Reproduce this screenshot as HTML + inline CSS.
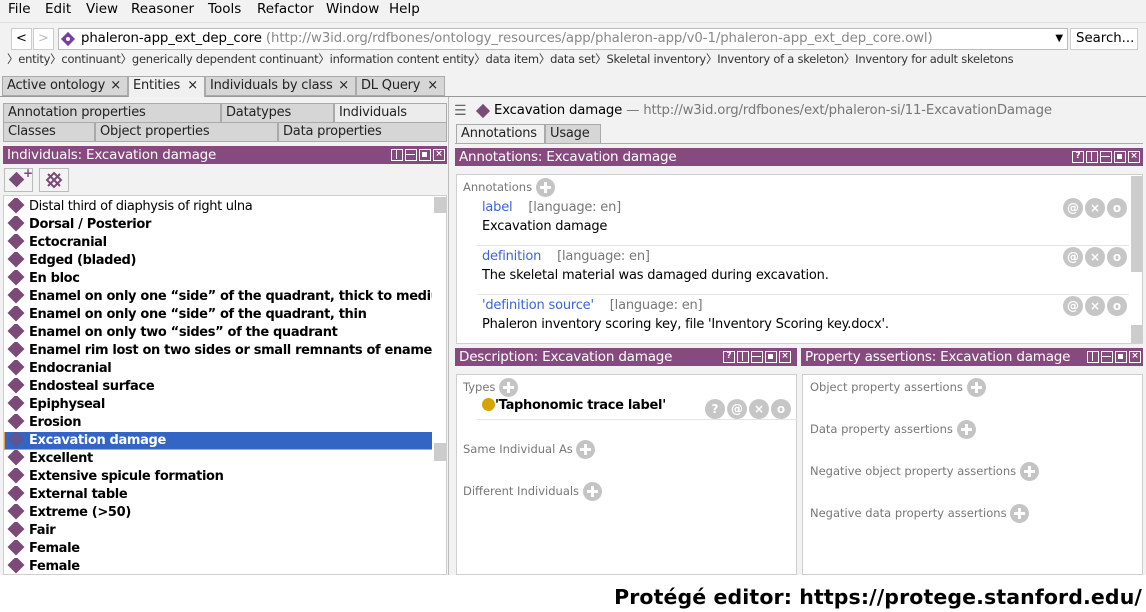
<!DOCTYPE html>
<html><head><meta charset="utf-8">
<style>
*{box-sizing:border-box;margin:0;padding:0}
body{width:1146px;height:612px;overflow:hidden;background:#f2f2f2;font-family:"DejaVu Sans","Liberation Sans",sans-serif;font-size:13px;color:#000;position:relative}
.a{position:absolute;white-space:nowrap}
.ph{position:absolute;background:#874a7e;color:#fff;font-size:13.5px;letter-spacing:-0.2px;line-height:18px;padding-left:4px;overflow:hidden;white-space:nowrap}
.wb{position:absolute;top:3px;display:flex;gap:2px}
.wb span{width:12px;height:12px;border:1.5px solid #fff;display:block;color:#fff;font-size:9px;line-height:9px;text-align:center;font-weight:bold;position:relative;letter-spacing:0}
.wb .v:after{content:"";position:absolute;left:3.5px;top:0;width:1.5px;height:9px;background:#fff}
.wb .h:after{content:"";position:absolute;left:0;top:3.5px;width:9px;height:1.5px;background:#fff}
.wb .f:after{content:"";position:absolute;left:2px;top:2px;width:5px;height:5px;background:#fff}
.tab{position:absolute;border:1px solid #aaa;background:#d6d6d6;line-height:18px;padding-left:4px;font-size:13px;letter-spacing:-0.2px;color:#222;white-space:nowrap}
.box{position:absolute;background:#fff;border:1px solid #cfcfcf}
.plus{display:inline-block;width:19px;height:19px;border-radius:50%;background:#c4c4c4;vertical-align:middle;position:relative}
.plus:before{content:"";position:absolute;left:4px;top:8px;width:11px;height:3px;background:#fff}
.plus:after{content:"";position:absolute;left:8px;top:4px;width:3px;height:11px;background:#fff}
.gr{color:#777;font-size:11.5px}
.ic{display:inline-block;width:20px;height:20px;border-radius:50%;background:#c6c6c6;color:#fff;font-weight:bold;font-size:12px;line-height:20px;text-align:center;margin-left:2px}
.d{display:inline-block;width:12px;height:12px;background:#7b4a77;transform:rotate(45deg);margin:0 7px 0 3px;vertical-align:-1px}
.row{height:18px;line-height:18px;font-weight:bold;font-size:13px;letter-spacing:-0.35px;padding-left:3px;white-space:nowrap;overflow:hidden;width:428px}
.blue{color:#3b64d8}
.m{position:absolute;top:1px;font-size:13.5px}
</style></head><body>
<!-- menu -->
<div class="m" style="left:8px">File</div>
<div class="m" style="left:45px">Edit</div>
<div class="m" style="left:86px">View</div>
<div class="m" style="left:131px">Reasoner</div>
<div class="m" style="left:208px">Tools</div>
<div class="m" style="left:257px">Refactor</div>
<div class="m" style="left:326px">Window</div>
<div class="m" style="left:389px">Help</div>
<div class="a" style="left:0;top:22px;width:1146px;height:1px;background:#ddd"></div>
<!-- nav -->
<div class="a" style="left:11px;top:28px;width:21px;height:22px;background:#fff;border:1px solid #ccc;text-align:center;line-height:20px">&lt;</div>
<div class="a" style="left:33px;top:28px;width:21px;height:22px;background:#fff;border:1px solid #ccc;text-align:center;line-height:20px;color:#bbb">&gt;</div>
<div class="a" style="left:58px;top:28px;width:1010px;height:22px;background:#fff;border:1px solid #bbb;line-height:20px;padding-left:22px;font-size:13.3px;letter-spacing:-0.1px">phaleron-app_ext_dep_core <span style="color:#888">(http://w3id.org/rdfbones/ontology_resources/app/phaleron-app/v0-1/phaleron-app_ext_dep_core.owl)</span>
<span style="position:absolute;left:4px;top:5px;width:10px;height:10px;background:#7a3ea0;transform:rotate(45deg)"></span>
<span style="position:absolute;left:7px;top:8px;width:4px;height:4px;background:#fff;border-radius:50%"></span>
<span style="position:absolute;right:4px;top:0;font-size:10px">▼</span></div>
<div class="a" style="left:1070px;top:28px;width:68px;height:22px;background:#fff;border:1px solid #ccc;line-height:20px;padding-left:5px;font-size:13.3px">Search...</div>
<div class="a" style="left:7px;top:51px;font-size:11.5px;letter-spacing:-0.25px;color:#333">〉entity〉continuant〉generically dependent continuant〉information content entity〉data item〉data set〉Skeletal inventory〉Inventory of a skeleton〉Inventory for adult skeletons</div>
<!-- main tabs -->
<div class="a" style="left:0;top:96px;width:1146px;height:1px;background:#999"></div>
<div class="tab" style="left:2px;top:76px;width:126px;height:20px">Active ontology <span style="position:absolute;right:6px">×</span></div>
<div class="tab" style="left:128px;top:76px;width:77px;height:21px;background:#f0f0f0;border-bottom:none">Entities <span style="position:absolute;right:6px">×</span></div>
<div class="tab" style="left:205px;top:76px;width:151px;height:20px">Individuals by class <span style="position:absolute;right:6px">×</span></div>
<div class="tab" style="left:356px;top:76px;width:89px;height:20px">DL Query <span style="position:absolute;right:6px">×</span></div>
<div class="a" style="left:448px;top:97px;width:1px;height:478px;background:#bbb"></div>
<!-- left tabs -->
<div class="tab" style="left:3px;top:103px;width:218px;height:20px">Annotation properties</div>
<div class="tab" style="left:221px;top:103px;width:113px;height:20px">Datatypes</div>
<div class="tab" style="left:334px;top:103px;width:113px;height:20px;background:#ececec">Individuals</div>
<div class="tab" style="left:3px;top:122px;width:92px;height:20px">Classes</div>
<div class="tab" style="left:95px;top:122px;width:183px;height:20px">Object properties</div>
<div class="tab" style="left:278px;top:122px;width:169px;height:20px">Data properties</div>
<div class="ph" style="left:3px;top:146px;width:444px;height:18px">Individuals: Excavation damage
<div class="wb" style="left:388px"><span class="v"></span><span class="h"></span><span class="f"></span><span>×</span></div></div>
<div class="a" style="left:4px;top:168px;width:29px;height:24px;border:1px solid #bbb;background:#f4f4f4"><span class="d" style="margin:5px 0 0 6px;width:11px;height:11px"></span><b style="position:absolute;left:18px;top:-3px;color:#7b4a77;font-size:12px">+</b></div>
<div class="a" style="left:39px;top:168px;width:30px;height:24px;border:1px solid #bbb;background:#f4f4f4">
<svg width="28" height="22" viewBox="0 0 28 22"><g stroke="#7b4a77" stroke-width="2" fill="none"><path d="M14 4 L21 11 L14 18 L7 11 Z"/><path d="M8 5 L20 17 M20 5 L8 17"/></g></svg></div>
<div class="box" style="left:3px;top:195px;width:444px;height:380px;overflow:hidden;padding-top:2px">
<div class="row" style="font-weight:normal"><span class="d"></span>Distal third of diaphysis of right ulna</div>
<div class="row"><span class="d"></span>Dorsal / Posterior</div>
<div class="row"><span class="d"></span>Ectocranial</div>
<div class="row"><span class="d"></span>Edged (bladed)</div>
<div class="row"><span class="d"></span>En bloc</div>
<div class="row"><span class="d"></span>Enamel on only one “side” of the quadrant, thick to medium</div>
<div class="row"><span class="d"></span>Enamel on only one “side” of the quadrant, thin</div>
<div class="row"><span class="d"></span>Enamel on only two “sides” of the quadrant</div>
<div class="row"><span class="d"></span>Enamel rim lost on two sides or small remnants of enamel</div>
<div class="row"><span class="d"></span>Endocranial</div>
<div class="row"><span class="d"></span>Endosteal surface</div>
<div class="row"><span class="d"></span>Epiphyseal</div>
<div class="row"><span class="d"></span>Erosion</div>
<div class="row" style="background:#3366c4;color:#fff;border-bottom:1px solid #e8a040;border-left:1px solid #e8a040;padding-left:2px"><span class="d" style="opacity:.6"></span>Excavation damage</div>
<div class="row"><span class="d"></span>Excellent</div>
<div class="row"><span class="d"></span>Extensive spicule formation</div>
<div class="row"><span class="d"></span>External table</div>
<div class="row"><span class="d"></span>Extreme (&gt;50)</div>
<div class="row"><span class="d"></span>Fair</div>
<div class="row"><span class="d"></span>Female</div>
<div class="row"><span class="d"></span>Female</div>
<div class="a" style="left:430px;top:1px;width:12px;height:16px;background:#ccc"></div>
<div class="a" style="left:430px;top:247px;width:12px;height:18px;background:#ccc"></div>
</div>
<!-- right header -->
<div class="a" style="left:454px;top:103px;font-size:14px;color:#666">☰</div>
<div class="a" style="left:478px;top:106px;width:10px;height:10px;background:#7b4a77;transform:rotate(45deg)"></div>
<div class="a" style="left:494px;top:103px;font-size:13.3px;letter-spacing:-0.2px">Excavation damage <span style="color:#777">— http://w3id.org/rdfbones/ext/phaleron-si/11-ExcavationDamage</span></div>
<div class="tab" style="left:456px;top:124px;width:89px;height:20px;background:#f0f0f0">Annotations</div>
<div class="tab" style="left:545px;top:124px;width:56px;height:20px">Usage</div>
<div class="a" style="left:455px;top:143px;width:688px;height:1px;background:#aaa"></div>
<div class="ph" style="left:455px;top:148px;width:688px;height:18px">Annotations: Excavation damage
<div class="wb" style="left:617px"><span>?</span><span class="v"></span><span class="h"></span><span class="f"></span><span>×</span></div></div>
<div class="box" style="left:456px;top:174px;width:687px;height:170px">
<div class="a gr" style="left:6px;top:3px">Annotations <span class="plus"></span></div>
<div class="a" style="left:25px;top:25px;letter-spacing:-0.2px"><span class="blue">label</span> <span style="color:#777;margin-left:12px">[language: en]</span></div>
<div class="a" style="left:25px;top:44px;letter-spacing:-0.2px">Excavation damage</div>
<div class="a" style="left:20px;top:70px;width:652px;height:1px;background:#e4e4e4"></div>
<div class="a" style="left:25px;top:74px;letter-spacing:-0.2px"><span class="blue">definition</span> <span style="color:#777;margin-left:12px">[language: en]</span></div>
<div class="a" style="left:25px;top:93px;letter-spacing:-0.2px">The skeletal material was damaged during excavation.</div>
<div class="a" style="left:20px;top:119px;width:652px;height:1px;background:#e4e4e4"></div>
<div class="a" style="left:25px;top:123px;letter-spacing:-0.2px"><span class="blue">'definition source'</span> <span style="color:#777;margin-left:12px">[language: en]</span></div>
<div class="a" style="left:25px;top:142px;letter-spacing:-0.2px">Phaleron inventory scoring key, file 'Inventory Scoring key.docx'.</div>
<div class="a" style="left:604px;top:23px"><span class="ic">@</span><span class="ic">×</span><span class="ic">o</span></div>
<div class="a" style="left:604px;top:72px"><span class="ic">@</span><span class="ic">×</span><span class="ic">o</span></div>
<div class="a" style="left:604px;top:121px"><span class="ic">@</span><span class="ic">×</span><span class="ic">o</span></div>
<div class="a" style="left:674px;top:1px;width:12px;height:96px;background:#ccc"></div>
<div class="a" style="left:674px;top:150px;width:12px;height:18px;background:#ccc"></div>
</div>
<!-- description -->
<div class="ph" style="left:455px;top:348px;width:342px;height:18px">Description: Excavation damage
<div class="wb" style="left:268px"><span>?</span><span class="v"></span><span class="h"></span><span class="f"></span><span>×</span></div></div>
<div class="box" style="left:456px;top:374px;width:341px;height:201px">
<div class="a gr" style="left:6px;top:3px">Types <span class="plus"></span></div>
<div class="a" style="left:25px;top:23px;font-weight:bold;font-size:13px;letter-spacing:-0.3px"><span style="display:inline-block;width:13px;height:13px;border-radius:50%;background:#d4a400;vertical-align:-2px"></span>'Taphonomic trace label'</div>
<div class="a" style="left:20px;top:44px;width:320px;height:1px;background:#e4e4e4"></div>
<div class="a" style="left:246px;top:24px"><span class="ic">?</span><span class="ic">@</span><span class="ic">×</span><span class="ic">o</span></div>
<div class="a gr" style="left:6px;top:65px">Same Individual As <span class="plus"></span></div>
<div class="a gr" style="left:6px;top:107px">Different Individuals <span class="plus"></span></div>
</div>
<div class="ph" style="left:801px;top:348px;width:342px;height:18px">Property assertions: Excavation damage
<div class="wb" style="left:284px;background:#874a7e;padding-left:2px"><span class="v"></span><span class="h"></span><span class="f"></span><span>×</span></div></div>
<div class="box" style="left:802px;top:374px;width:341px;height:201px">
<div class="a gr" style="left:7px;top:3px">Object property assertions <span class="plus"></span></div>
<div class="a gr" style="left:7px;top:45px">Data property assertions <span class="plus"></span></div>
<div class="a gr" style="left:7px;top:87px">Negative object property assertions <span class="plus"></span></div>
<div class="a gr" style="left:7px;top:129px">Negative data property assertions <span class="plus"></span></div>
</div>
<!-- footer -->
<div class="a" style="left:0;top:575px;width:1146px;height:37px;background:#fff"></div>
<div class="a" style="right:4px;top:585px;font-weight:bold;font-size:20.5px;letter-spacing:0.1px">Protégé editor: https://protege.stanford.edu/</div>
</body></html>
